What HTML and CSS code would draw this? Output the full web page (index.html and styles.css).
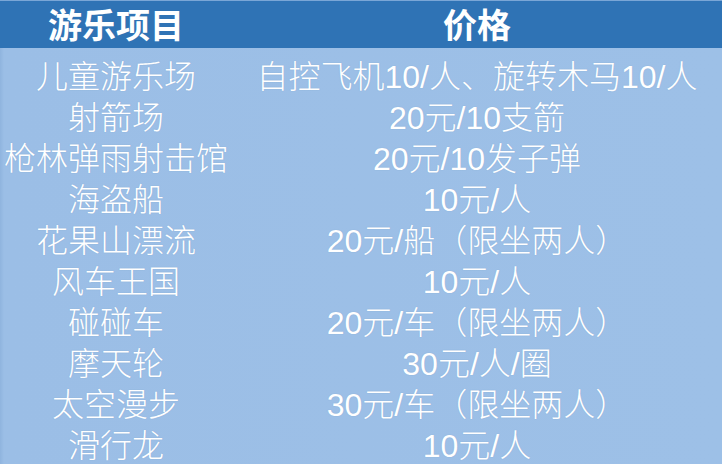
FILE: index.html
```html
<!DOCTYPE html>
<html lang="zh">
<head>
<meta charset="utf-8">
<link rel="stylesheet" href="styles.css">
</head>
<body>
<div class="sheet">
  <div class="head">
    <div class="col-a">游乐项目</div>
    <div class="col-b">价格</div>
  </div>
  <div class="body">
    <div class="row"><div class="col-a">儿童游乐场</div><div class="col-b">自控飞机10/人、旋转木马10/人</div></div>
    <div class="row"><div class="col-a">射箭场</div><div class="col-b">20元/10支箭</div></div>
    <div class="row"><div class="col-a">枪林弹雨射击馆</div><div class="col-b">20元/10发子弹</div></div>
    <div class="row"><div class="col-a">海盗船</div><div class="col-b">10元/人</div></div>
    <div class="row"><div class="col-a">花果山漂流</div><div class="col-b">20元/船（限坐两人）</div></div>
    <div class="row"><div class="col-a">风车王国</div><div class="col-b">10元/人</div></div>
    <div class="row"><div class="col-a">碰碰车</div><div class="col-b">20元/车（限坐两人）</div></div>
    <div class="row"><div class="col-a">摩天轮</div><div class="col-b">30元/人/圈</div></div>
    <div class="row"><div class="col-a">太空漫步</div><div class="col-b">30元/车（限坐两人）</div></div>
    <div class="row"><div class="col-a">滑行龙</div><div class="col-b">10元/人</div></div>
  </div>
</div>
</body>
</html>
```
FILE: styles.css
```css
html, body {
  margin: 0;
  padding: 0;
  width: 722px;
  height: 464px;
  overflow: hidden;
  background: #9dc0e7;
}
.sheet {
  width: 722px;
  height: 464px;
  color: #ffffff;
  background: linear-gradient(90deg, #8fb4de 0, #9bbee6 4px, #9dc0e7 100%);
}
.head {
  display: flex;
  height: 47px;
  background: #2f73b5;
  border-top: 1px solid #7aa6d6;
  font-family: "Noto Sans CJK SC", "Noto Sans", sans-serif;
  font-size: 34px;
  font-weight: 700;
  line-height: 46px;
}
.body {
  padding-top: 9px;
}
.row {
  display: flex;
  height: 41px;
  line-height: 40px;
  font-family: "Liberation Sans", "Noto Sans CJK SC", sans-serif;
  font-size: 32px;
  font-weight: 300;
  text-shadow: 0 0 1px rgba(80, 120, 170, 0.35);
}
.col-a {
  width: 232px;
  text-align: center;
  white-space: nowrap;
}
.col-b {
  flex: 1;
  text-align: center;
  white-space: nowrap;
}
```
